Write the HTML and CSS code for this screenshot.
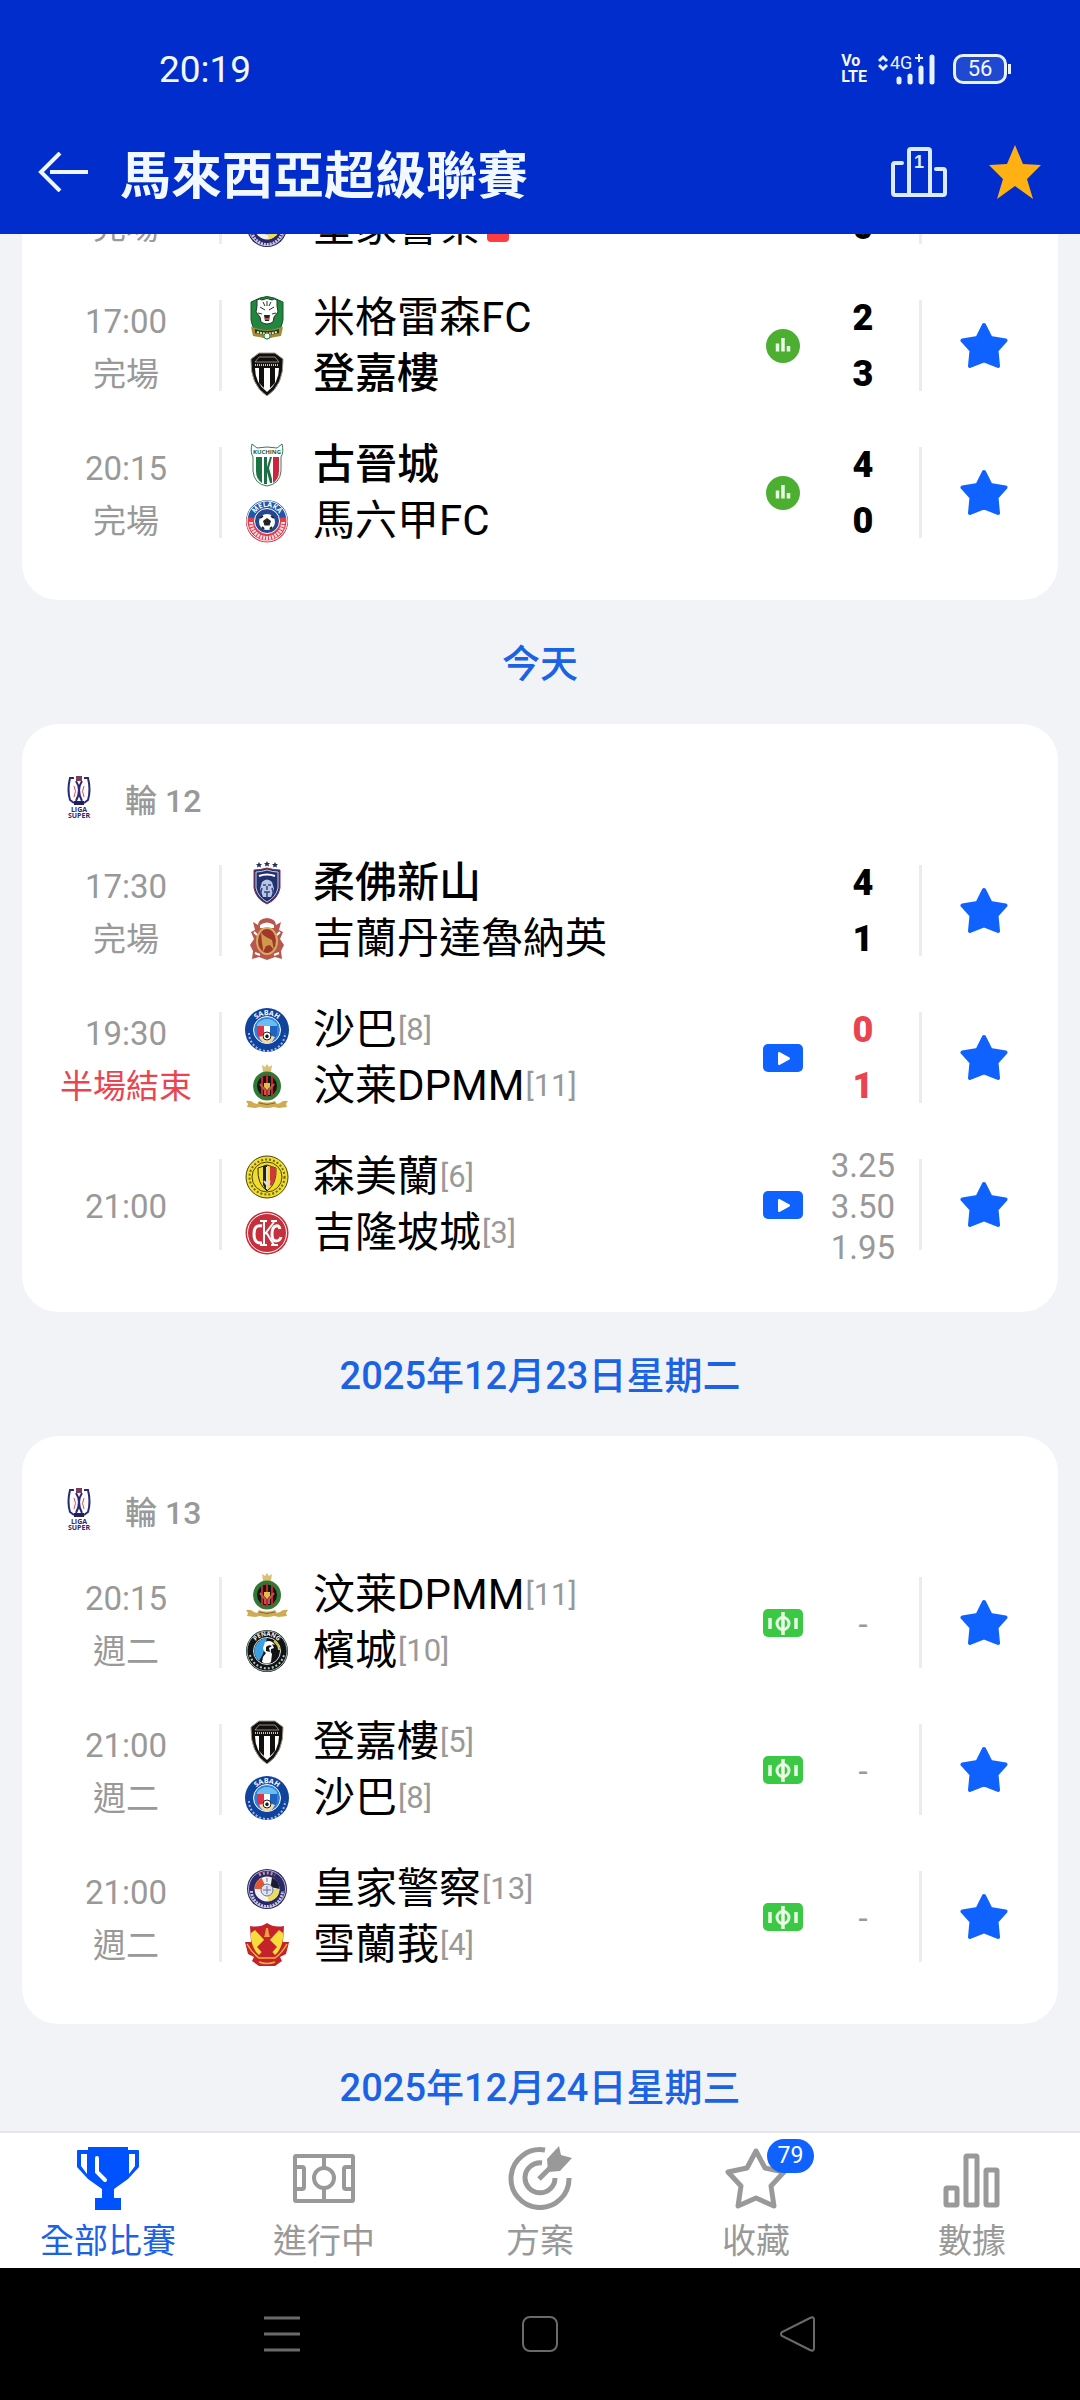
FILE: index.html
```html
<!DOCTYPE html>
<html lang="zh-Hant">
<head>
    <meta charset="UTF-8">
    <meta name="viewport" content="width=device-width, initial-scale=1.0">
    <title>馬來西亞超級聯賽</title>
    <link rel="stylesheet" href="styles.css">
</head>
<body>
    <!-- Shared icons and crests -->
    <svg class="sprite" aria-hidden="true">
        <symbol id="star" viewBox="0 0 48 48">
            <path d="M24 3l6.500 13 15 2.500-9 10 1.500 15.500-14-5.500-14 5.500 1.500-15.500-9-10 15-2.500z" fill="#1062fe" stroke="#1062fe" stroke-width="4" stroke-linejoin="round"/>
        </symbol>
        <symbol id="stats" viewBox="0 0 34 34">
            <circle cx="17" cy="17" r="17" fill="#4caf32"/>
            <path d="M11.500 14.500v8M17 9v13.500M22.500 17v5.500" stroke="#e9fbe4" stroke-width="3.500"/>
        </symbol>
        <symbol id="play" viewBox="0 0 40 28">
            <rect width="40" height="28" rx="5" fill="#1062fe"/>
            <path d="M16 9v11l10-5.500z" fill="#fff" stroke="#fff" stroke-width="2" stroke-linejoin="round"/>
        </symbol>
        <symbol id="pitch" viewBox="0 0 40 28">
            <rect width="40" height="28" rx="5" fill="#3bc844"/>
            <path d="M7 9v11M33 9v11M20 3v23" stroke="#e9fbe4" stroke-width="3.500"/>
            <circle cx="20" cy="14.500" r="6" fill="none" stroke="#e9fbe4" stroke-width="3"/>
        </symbol>

        <symbol id="league" viewBox="0 0 44 44">
            <path d="M17 2h-4q-3 12 0 22l4 3M27 2h4q3 12 0 22l-4 3" fill="none" stroke="#2b2875" stroke-width="2"/>
            <path d="M19 5q6 9 0 20M25 5q-6 9 0 20" fill="none" stroke="#2b2875" stroke-width="2"/>
            <path d="M17 10q3 5 0 11M27 10q-3 5 0 11" fill="none" stroke="#e0485a" stroke-width="1"/>
            <rect x="19" y="0" width="6" height="5" fill="#7a3f5c"/>
            <rect x="17" y="25" width="10" height="4" fill="#211f5e"/>
            <text x="22" y="36" class="crest-text" font-size="7" fill="#2b2875">LIGA</text>
            <text x="22" y="42" class="crest-text" font-size="7" fill="#2b2875">SUPER</text>
        </symbol>

        <symbol id="pdrm" viewBox="0 0 44 44">
            <circle cx="22" cy="22" r="20" fill="#2a2867"/>
            <circle cx="22" cy="22" r="18.500" fill="none" stroke="#b9b7d8" stroke-width="1"/>
            <circle cx="22" cy="22" r="12.500" fill="#f2f2f2"/>
            <path d="M9.500 22a12.500 12.500 0 0 1 7-11l5.500 11z" fill="#e2572f"/>
            <path d="M34.500 22a12.500 12.500 0 0 1-11 12.400L22 22z" fill="#e9dd5a"/>
            <path d="M27 10.500a12.500 12.500 0 0 1 7.500 11.500l-9-2z" fill="#1b1b33"/>
            <circle cx="22" cy="23" r="6" fill="#dfe2ee" stroke="#6b7196" stroke-width="1"/>
            <path d="M22 15v-4M18 23h8M22 19v8" stroke="#6b7196" stroke-width="1"/>
            <path d="M6.500 24a15.500 15.500 0 0 0 31 0" fill="none" stroke="#c9c8e4" stroke-width="3" stroke-dasharray="2 1"/>
            <path d="M14 8q8-4 16 0" fill="none" stroke="#c98fa0" stroke-width="3" stroke-dasharray="2 2"/>
        </symbol>

        <symbol id="migration" viewBox="0 0 44 44">
            <path d="M6 6l9-4q7-3 14 0l9 4v18q-2 14-16 19Q8 38 6 24z" fill="#23863f" stroke="#14562a" stroke-width="1"/>
            <path d="M12 4q3-2 5 0 5-3 10 0 2-2 5 0v6l1 6-4 5-1 5q-6 4-12 0l-1-5-4-5 1-6z" fill="#fff" stroke="#1e3a26" stroke-width="1"/>
            <path d="M15 11l5 3M29 11l-5 3M22 5v5M18 6l2 4M26 6l-2 4M13 17l4 1M31 17l-4 1" stroke="#1e3a26" stroke-width="1"/>
            <path d="M19 19h6l-1 6h-4z" fill="#1e2b22"/>
            <path d="M20 22h4v2h-4z" fill="#d44"/>
            <path d="M6 31l5 1q11 4 22 0l5-1-2 9-6 1q-8 2-16 0l-6-1z" fill="#a58a34"/>
            <path d="M10 33q12 4 24 0v4q-12 3-24 0z" fill="#1c3f25"/>
            <path d="M12 36q10 3 20 0" fill="none" stroke="#e6dfb8" stroke-width="2" stroke-dasharray="2 1"/>
            <circle cx="22" cy="40" r="3" fill="#fff" stroke="#23863f" stroke-width="1"/>
        </symbol>

        <symbol id="terengganu" viewBox="0 0 44 44">
            <path d="M14 1h16l8 6q1 26-16 37Q5 33 6 7z" fill="#12100f" stroke="#a09a8b" stroke-width="1"/>
            <path d="M14 5h16l4 5H10z" fill="none" stroke="#8d887c" stroke-width="1"/>
            <path d="M10 16h24q0 15-12 24Q10 31 10 16z" fill="#fff"/>
            <path d="M14 16h5v20l-5-5zM25 16h5v15l-5 5z" fill="#12100f"/>
            <path d="M10 13h24" stroke="#c8c4b8" stroke-width="2" stroke-dasharray="1 1"/>
        </symbol>

        <symbol id="kuching" viewBox="0 0 44 44">
            <path d="M7 1l5 4q10-2 20 0l5-4q2 8-1 13v14q-1 13-14 15Q9 41 8 28V14Q5 9 7 1z" fill="#fff" stroke="#3a7a52" stroke-width="1"/>
            <text x="22" y="11" class="crest-text" font-size="6" fill="#1a5c38">KUCHING</text>
            <path d="M11 14h6v26q-6-4-6-12z" fill="#1d7044"/>
            <path d="M19 14h3v10l3-10h2l-3 11 3 11v4h-2l-3-11v12h-3z" fill="#1d7044"/>
            <path d="M28 14h6v14q0 8-6 12z" fill="#cf2540"/>
        </symbol>

        <symbol id="melaka" viewBox="0 0 44 44">
            <circle cx="22" cy="22" r="21" fill="#2257a8"/>
            <path d="M1.500 18a21 21 0 1 0 41 0l-7 1H8z" fill="#e23c4d"/>
            <circle cx="22" cy="22" r="20" fill="none" stroke="#fff" stroke-width="1"/>
            <circle cx="22" cy="22" r="12.500" fill="#24488f" stroke="#fff" stroke-width="1"/>
            <circle cx="22" cy="23" r="8" fill="#fff"/>
            <path d="M22 19l4 3-1.500 4.500h-5L18 22z" fill="#222"/>
            <path d="M15 19l3-2M26 17l3 2M17 28l2 2M27 28l-2 2" stroke="#222" stroke-width="2"/>
            <path id="melaka-top" d="M8 22a14 14 0 0 1 28 0" fill="none"/>
            <text font-size="7" class="crest-text" fill="#fff"><textPath href="#melaka-top" startOffset="50%">MELAKA</textPath></text>
            <path d="M6 23a16 16 0 0 0 32 0" fill="none" stroke="#fbdde0" stroke-width="4" stroke-dasharray="2 1"/>
        </symbol>

        <symbol id="johor" viewBox="0 0 44 44">
            <path d="M14 1l1 2h2l-1.500 1.500.5 2-2-1-2 1 .5-2L11 3h2zM22 0l1 2h2l-1.500 1.500.5 2-2-1-2 1 .5-2L19 2h2zM30 1l1 2h2l-1.500 1.500.5 2-2-1-2 1 .5-2L27 3h2z" fill="#22305f"/>
            <path d="M9 9q6 0 13-2 7 2 13 2v18q-2 11-13 16Q11 38 9 27z" fill="#22306f" stroke="#8c3150" stroke-width="1"/>
            <path d="M11 11q5 0 11-2 6 2 11 2v16q-2 9-11 14-9-5-11-14z" fill="none" stroke="#c9cfe6" stroke-width="1"/>
            <path d="M14 15q8-3 16 0" fill="none" stroke="#fff" stroke-width="2"/>
            <path d="M17 21q5-5 10 0l2 7-3 8h-8l-3-8z" fill="#b9c6e3"/>
            <path d="M18 24h3M23 24h3M22 25v4M19 31h6M17 27l-2 7M27 27l2 7M22 31v6" stroke="#33467f" stroke-width="1.500"/>
        </symbol>

        <symbol id="kelantan" viewBox="0 0 44 44">
            <path d="M13 8q0-6 9-7 9 1 9 7l5-3-2 8 4 2-3 7 4 6-3 6 1 8-7-2-8 3-8-3-7 2 1-8-3-6 4-6-3-7 4-2-2-8z" fill="#b8574d"/>
            <path d="M15 8q7-5 14 0v3H15z" fill="#fff"/>
            <ellipse cx="22" cy="24" rx="10" ry="13" fill="#a2382c" stroke="#d8aa5a" stroke-width="2"/>
            <path d="M16 15q2 4 5 5l6 3 2 10-4-5-4 1-3 6q0-6-1-9z" fill="#cf9a4b"/>
            <path d="M10 36l5 2M34 36l-5 2M9 15l3 3M35 15l-3 3" stroke="#fff" stroke-width="2"/>
        </symbol>

        <symbol id="sabah" viewBox="0 0 44 44">
            <circle cx="22" cy="22" r="22" fill="#12439c"/>
            <circle cx="22" cy="22" r="13.500" fill="#2a83dc" stroke="#fff" stroke-width="1"/>
            <path d="M12 16q4-5 10-5t10 5v3H12z" fill="#6bbcf0"/>
            <path d="M12 18h7v15q-6-3-7-8z" fill="#e03244"/>
            <path d="M19 18h6v16h-6z" fill="#fff"/>
            <path d="M25 18h7v8q-1 5-7 8z" fill="#1f62c1"/>
            <path d="M14 29q8-4 16 0-3 6-8 7-5-1-8-7z" fill="#f3d9a8"/>
            <circle cx="22" cy="28" r="4" fill="#fff" stroke="#222" stroke-width="1"/>
            <path d="M22 26l2 2-1 2h-2l-1-2z" fill="#222"/>
            <path id="sabah-top" d="M7 22a15 15 0 0 1 30 0" fill="none"/>
            <text font-size="7" class="crest-text" fill="#fff"><textPath href="#sabah-top" startOffset="50%">SABAH</textPath></text>
            <path d="M4 25a18 18 0 0 0 36 0" fill="none" stroke="#9db9e6" stroke-width="2" stroke-dasharray="2 2"/>
        </symbol>

        <symbol id="dpmm" viewBox="0 0 44 44">
            <path d="M17 1l3 2 2-3 2 3 3-2-1 7h-8z" fill="#d9bf78"/>
            <ellipse cx="22" cy="22" rx="12" ry="12.500" fill="#1b1312" stroke="#2e7a35" stroke-width="4"/>
            <path d="M17 12v20M22 10v24M27 12v20" stroke="#b52a2f" stroke-width="2"/>
            <path d="M15 20l5 6v5M29 20l-5 6v5" fill="none" stroke="#c5534d" stroke-width="2"/>
            <path d="M19 19h6v4l-3 3-3-3z" fill="#e7bd45"/>
            <path d="M1 37q5-1 8 2l3 1 2-3q8 3 16 0l2 3 3-1q3-3 8-2l-2 3 1 3-8 1-5-1q-7 2-14 0l-5 1-8-1 1-3z" fill="#d0ab55"/>
            <path d="M14 39q8 3 16 0" fill="none" stroke="#8c6a25" stroke-width="1"/>
        </symbol>

        <symbol id="negeri" viewBox="0 0 44 44">
            <circle cx="22" cy="22" r="21" fill="#efdd2e" stroke="#4a430f" stroke-width="1"/>
            <circle cx="22" cy="22" r="17.500" fill="none" stroke="#6f6518" stroke-width="2" stroke-dasharray="2 2"/>
            <circle cx="22" cy="22" r="15" fill="none" stroke="#4a430f" stroke-width="1"/>
            <path d="M13 13l9-3 9 3q1 16-9 23-10-7-9-23z" fill="#f3df32" stroke="#3a2c12" stroke-width="1"/>
            <path d="M18 11l4-1v26q-3-3-4-6z" fill="#222"/>
            <path d="M25 11l6 2q1 11-5 18l-1-1z" fill="#cf3a36"/>
            <path d="M22 12v22M19 26l3 4 3-4" fill="none" stroke="#ddd" stroke-width="2"/>
        </symbol>

        <symbol id="kualalumpur" viewBox="0 0 44 44">
            <circle cx="22" cy="22" r="21.500" fill="#c5303c"/>
            <circle cx="22" cy="22" r="19.500" fill="none" stroke="#fff" stroke-width="1"/>
            <path d="M17 15q-8-2-8 8t8 9M35 18q-1-4-4-3-4 1-4 8t4 7q4 0 5-4" fill="none" stroke="#fff" stroke-width="3"/>
            <path d="M19 10v24M15 10h7M15 34h7M29 11l-9 12M21 21l8 13M26 10h6M26 34h7" fill="none" stroke="#fff" stroke-width="2"/>
        </symbol>

        <symbol id="penang" viewBox="0 0 44 44">
            <circle cx="22" cy="22" r="21" fill="#101416"/>
            <circle cx="22" cy="22" r="20" fill="none" stroke="#9fb3a8" stroke-width="1"/>
            <circle cx="22" cy="22" r="13.500" fill="#101416" stroke="#dfe5e6" stroke-width="1"/>
            <path d="M22 9a13 13 0 0 0-8 23l4-7z" fill="#3da0e0"/>
            <path d="M20 13q6-3 10 3l-3-1 2 4-3 1q-1 3 1 5l-1 8q-4 3-9 0l1-5 3-4q-3-2-3-5z" fill="#fff"/>
            <path d="M21 18q3-3 6-1l-3 2 1 4-4-1z" fill="#101416"/>
            <path d="M29 12q5 4 5 9" fill="none" stroke="#d9c84a" stroke-width="2"/>
            <path id="penang-top" d="M7 22a15 15 0 0 1 30 0" fill="none"/>
            <text font-size="6" class="crest-text" fill="#fff"><textPath href="#penang-top" startOffset="50%">PENANG</textPath></text>
            <path d="M5 26a17.500 17.500 0 0 0 34 0" fill="none" stroke="#b9c3c4" stroke-width="2" stroke-dasharray="2 2"/>
        </symbol>

        <symbol id="selangor" viewBox="0 0 44 44">
            <path d="M22 0q7 5 17 3l-1 16 6 0-3 12-6 3 2 4-7 5H14l-7-5 2-4-6-3-3-12h6L5 3q10 2 17-3z" fill="#c4232c"/>
            <path d="M6 10l4-3 12 13L34 7l4 3q1 10-5 19l-3 3-8-9-8 9-3-3Q5 20 6 10z" fill="#f7dc3c"/>
            <path d="M22 14l10 10-10 11-10-11z" fill="#c4232c"/>
            <path d="M20 11l1-6h2l1 6 1 3h-6z" fill="#f0a03c"/>
            <path d="M2 21q5 9 12 14h16q7-5 12-14M14 39q8 3 16 0" fill="none" stroke="#efb23c" stroke-width="1.500"/>
        </symbol>
    </svg>

    <header class="header">
        <div class="status-bar">
            <span class="clock">20:19</span>
            <div class="status-icons">
                <span class="volte">Vo<br>LTE</span>
                <svg class="signal" viewBox="0 0 58 32">
                    <path d="M1 8l4-4 4 4M1 12l4 4 4-4" fill="none" stroke="#e8f2ff" stroke-width="3"/>
                    <text x="12" y="16" font-size="18" fill="#e8f2ff">4G</text>
                    <path d="M37 5h8M41 1v8" stroke="#e8f2ff" stroke-width="2"/>
                    <path d="M21 26v3M32 23v6M43 15v14M54 4v25" stroke="#e8f2ff" stroke-width="5" stroke-linecap="round"/>
                </svg>
                <span class="battery">56</span>
            </div>
        </div>
        <div class="app-bar">
            <button class="icon-button" aria-label="返回">
                <svg class="back-icon" viewBox="0 0 50 40"><path d="M22 1L3 20l19 19M12 20h38" fill="none" stroke="#eef6ff" stroke-width="4"/></svg>
            </button>
            <h1 class="title">馬來西亞超級聯賽</h1>
            <button class="icon-button" aria-label="積分榜">
                <svg class="podium-icon" viewBox="0 0 56 52">
                    <path d="M11 17H4q-2 0-2 2v28q0 2 2 2h48q2 0 2-2V25q0-2-2-2h-7M18 49V5q0-2 2-2h17q2 0 2 2v44" fill="none" stroke="#dceaff" stroke-width="4" stroke-linecap="round"/>
                    <text x="28" y="22" font-size="18" font-weight="700" text-anchor="middle" fill="#dceaff">1</text>
                </svg>
            </button>
            <button class="icon-button" aria-label="取消收藏">
                <svg class="gold-star" viewBox="0 0 54 54"><path d="M27 0l8 19 18 1-14 14 6 20-18-13L9 54l6-20L1 20l18-1z" fill="#ffb012"/></svg>
            </button>
        </div>
    </header>

    <main class="content">
        <section class="card card-scrolled">
            <div class="match">
                <div class="when"><span></span><span>完場</span></div>
                <i class="divider"></i>
                <div class="teams">
                    <div class="team"></div>
                    <div class="team"><svg class="crest"><use href="#pdrm"/></svg><span>皇家警察</span><i class="red-card"></i></div>
                </div>
                <div class="info"></div>
                <div class="score"><span></span><span>0</span></div>
                <i class="divider"></i>
                <div class="favourite"></div>
            </div>
            <div class="match">
                <div class="when"><span>17:00</span><span>完場</span></div>
                <i class="divider"></i>
                <div class="teams">
                    <div class="team"><svg class="crest"><use href="#migration"/></svg><span>米格雷森FC</span></div>
                    <div class="team winner"><svg class="crest"><use href="#terengganu"/></svg><span>登嘉樓</span></div>
                </div>
                <div class="info"><svg class="stats-icon"><use href="#stats"/></svg></div>
                <div class="score"><span>2</span><span>3</span></div>
                <i class="divider"></i>
                <button class="favourite" aria-label="收藏"><svg class="star-icon"><use href="#star"/></svg></button>
            </div>
            <div class="match">
                <div class="when"><span>20:15</span><span>完場</span></div>
                <i class="divider"></i>
                <div class="teams">
                    <div class="team winner"><svg class="crest"><use href="#kuching"/></svg><span>古晉城</span></div>
                    <div class="team"><svg class="crest"><use href="#melaka"/></svg><span>馬六甲FC</span></div>
                </div>
                <div class="info"><svg class="stats-icon"><use href="#stats"/></svg></div>
                <div class="score"><span>4</span><span>0</span></div>
                <i class="divider"></i>
                <button class="favourite" aria-label="收藏"><svg class="star-icon"><use href="#star"/></svg></button>
            </div>
        </section>

        <h2 class="date">今天</h2>

        <section class="card">
            <div class="round"><svg class="crest"><use href="#league"/></svg><span>輪 12</span></div>
            <div class="match">
                <div class="when"><span>17:30</span><span>完場</span></div>
                <i class="divider"></i>
                <div class="teams">
                    <div class="team winner"><svg class="crest"><use href="#johor"/></svg><span>柔佛新山</span></div>
                    <div class="team"><svg class="crest"><use href="#kelantan"/></svg><span>吉蘭丹達魯納英</span></div>
                </div>
                <div class="info"></div>
                <div class="score"><span>4</span><span>1</span></div>
                <i class="divider"></i>
                <button class="favourite" aria-label="收藏"><svg class="star-icon"><use href="#star"/></svg></button>
            </div>
            <div class="match live">
                <div class="when"><span>19:30</span><span>半場結束</span></div>
                <i class="divider"></i>
                <div class="teams">
                    <div class="team"><svg class="crest"><use href="#sabah"/></svg><span>沙巴</span><small>[8]</small></div>
                    <div class="team"><svg class="crest"><use href="#dpmm"/></svg><span>汶莱DPMM</span><small>[11]</small></div>
                </div>
                <div class="info"><svg class="box-icon"><use href="#play"/></svg></div>
                <div class="score"><span>0</span><span>1</span></div>
                <i class="divider"></i>
                <button class="favourite" aria-label="收藏"><svg class="star-icon"><use href="#star"/></svg></button>
            </div>
            <div class="match">
                <div class="when"><span>21:00</span></div>
                <i class="divider"></i>
                <div class="teams">
                    <div class="team"><svg class="crest"><use href="#negeri"/></svg><span>森美蘭</span><small>[6]</small></div>
                    <div class="team"><svg class="crest"><use href="#kualalumpur"/></svg><span>吉隆坡城</span><small>[3]</small></div>
                </div>
                <div class="info"><svg class="box-icon"><use href="#play"/></svg></div>
                <div class="odds"><span>3.25</span><span>3.50</span><span>1.95</span></div>
                <i class="divider"></i>
                <button class="favourite" aria-label="收藏"><svg class="star-icon"><use href="#star"/></svg></button>
            </div>
        </section>

        <h2 class="date">2025年12月23日星期二</h2>

        <section class="card">
            <div class="round"><svg class="crest"><use href="#league"/></svg><span>輪 13</span></div>
            <div class="match">
                <div class="when"><span>20:15</span><span>週二</span></div>
                <i class="divider"></i>
                <div class="teams">
                    <div class="team"><svg class="crest"><use href="#dpmm"/></svg><span>汶莱DPMM</span><small>[11]</small></div>
                    <div class="team"><svg class="crest"><use href="#penang"/></svg><span>檳城</span><small>[10]</small></div>
                </div>
                <div class="info"><svg class="box-icon"><use href="#pitch"/></svg></div>
                <div class="odds"><span>-</span></div>
                <i class="divider"></i>
                <button class="favourite" aria-label="收藏"><svg class="star-icon"><use href="#star"/></svg></button>
            </div>
            <div class="match">
                <div class="when"><span>21:00</span><span>週二</span></div>
                <i class="divider"></i>
                <div class="teams">
                    <div class="team"><svg class="crest"><use href="#terengganu"/></svg><span>登嘉樓</span><small>[5]</small></div>
                    <div class="team"><svg class="crest"><use href="#sabah"/></svg><span>沙巴</span><small>[8]</small></div>
                </div>
                <div class="info"><svg class="box-icon"><use href="#pitch"/></svg></div>
                <div class="odds"><span>-</span></div>
                <i class="divider"></i>
                <button class="favourite" aria-label="收藏"><svg class="star-icon"><use href="#star"/></svg></button>
            </div>
            <div class="match">
                <div class="when"><span>21:00</span><span>週二</span></div>
                <i class="divider"></i>
                <div class="teams">
                    <div class="team"><svg class="crest"><use href="#pdrm"/></svg><span>皇家警察</span><small>[13]</small></div>
                    <div class="team"><svg class="crest"><use href="#selangor"/></svg><span>雪蘭莪</span><small>[4]</small></div>
                </div>
                <div class="info"><svg class="box-icon"><use href="#pitch"/></svg></div>
                <div class="odds"><span>-</span></div>
                <i class="divider"></i>
                <button class="favourite" aria-label="收藏"><svg class="star-icon"><use href="#star"/></svg></button>
            </div>
        </section>

        <h2 class="date">2025年12月24日星期三</h2>
    </main>

    <nav class="tabs">
        <a href="#" class="tab active">
            <svg class="tab-icon" viewBox="0 0 64 64">
                <path d="M12 1h40v3h10q1 0 1 1v16L52 33 38 43v9h7v12H19V52h7v-9L12 33 1 21V5q0-1 1-1h10z" fill="#0052ff"/>
                <path d="M5 8h6v20l-6-8zM53 8h6v12l-6 8z" fill="#fff"/>
                <path d="M21 12v14l8 8" fill="none" stroke="#fff" stroke-width="4" stroke-linecap="round"/>
            </svg>
            全部比賽
        </a>
        <a href="#" class="tab">
            <svg class="tab-icon" viewBox="0 0 64 64" fill="none" stroke="#999" stroke-width="4">
                <rect x="3" y="10" width="58" height="45" rx="1"/>
                <path d="M32 10v12M32 43v12M3 21h7q2 0 2 2v18q0 2-2 2H3M61 21h-7q-2 0-2 2v18q0 2 2 2h7"/>
                <circle cx="32" cy="32" r="10"/>
            </svg>
            進行中
        </a>
        <a href="#" class="tab">
            <svg class="tab-icon" viewBox="0 0 64 64" fill="none" stroke="#999" stroke-width="5">
                <path d="M37 4A29 29 0 1 0 61 32M34 17A15 15 0 1 0 47 32M31 33l15-15"/>
                <path d="M39 13L51 0l2 9 11 3-12 13-12 1z" fill="#999" stroke="none"/>
            </svg>
            方案
        </a>
        <a href="#" class="tab">
            <svg class="tab-icon" viewBox="0 0 64 64">
                <path d="M32 5l9 17 19 4-13 14 3 20-18-8-18 8 3-20L4 26l19-4z" fill="none" stroke="#999" stroke-width="5" stroke-linejoin="round"/>
            </svg>
            收藏
            <span class="badge">79</span>
        </a>
        <a href="#" class="tab">
            <svg class="tab-icon" viewBox="0 0 64 64" fill="none" stroke="#999" stroke-width="5">
                <rect x="6" y="42" width="11" height="17" rx="1"/>
                <rect x="26" y="10" width="11" height="49" rx="1"/>
                <rect x="46" y="24" width="11" height="35" rx="1"/>
            </svg>
            數據
        </a>
    </nav>

    <div class="system-nav">
        <button class="icon-button" aria-label="選單"><svg class="system-icon" viewBox="0 0 36 36"><path d="M0 2h36M0 18h36M0 34h36" stroke="#6a6a6a" stroke-width="3"/></svg></button>
        <button class="icon-button" aria-label="主畫面"><svg class="system-icon" viewBox="0 0 36 36"><rect x="1" y="1" width="34" height="34" rx="7" fill="none" stroke="#6a6a6a" stroke-width="2"/></svg></button>
        <button class="icon-button" aria-label="返回"><svg class="system-icon" viewBox="0 0 36 36"><path d="M34 4v28q0 4-4 2L2 20q-2-2 0-4L30 2q4-2 4 2z" fill="none" stroke="#6a6a6a" stroke-width="2"/></svg></button>
    </div>
</body>
</html>
```

FILE: styles.css
```css
* {
    box-sizing: border-box;
}

body {
    margin: 0;
    height: 100vh;
    display: flex;
    flex-direction: column;
    background: #f1f3f7;
    color: #000;
    font-family: Roboto, "Noto Sans CJK TC", sans-serif;
    overflow: hidden;
}

svg {
    display: block;
}

.sprite {
    display: none;
}

.crest-text {
    font-family: "Open Sans", sans-serif;
    font-weight: 700;
    text-anchor: middle;
}

.icon-button,
.favourite {
    padding: 0;
    border: 0;
    background: none;
    cursor: pointer;
}

/* Header */
.header {
    position: relative;
    z-index: 1;
    flex: none;
    background: #002dcb;
    color: #f2f8ff;
}

.status-bar {
    display: flex;
    align-items: center;
    justify-content: space-between;
    height: 110px;
    padding: 28px 73px 0 159px;
}

.clock {
    font-size: 37px;
}

.status-icons {
    display: flex;
    align-items: center;
}

.volte {
    font-size: 16px;
    font-weight: 700;
    line-height: 16px;
    margin-right: 11px;
}

.signal {
    width: 58px;
    height: 32px;
    margin-right: 17px;
}

.battery {
    position: relative;
    width: 54px;
    height: 30px;
    border: 3px solid #e8f2ff;
    border-radius: 10px;
    background: #2049d2;
    font-size: 22px;
    line-height: 24px;
    text-align: center;
}

.battery::after {
    content: "";
    position: absolute;
    top: 7px;
    right: -7px;
    width: 3px;
    height: 10px;
    background: #e8f2ff;
}

.app-bar {
    display: flex;
    align-items: center;
    height: 124px;
    padding: 0 38px;
}

.back-icon {
    width: 50px;
    height: 40px;
}

.title {
    flex: 1;
    margin: 0 0 0 32px;
    font-size: 51px;
    font-weight: 700;
}

.podium-icon {
    width: 56px;
    height: 52px;
    margin-right: 41px;
}

.gold-star {
    width: 54px;
    height: 54px;
}

/* Match list */
.content {
    flex: 1;
    min-height: 0;
    padding: 0 22px;
}

.card {
    padding: 35px 12px 34px 8px;
    border-radius: 36px;
    background: #fff;
}

/* first card is scrolled up under the header */
.card-scrolled {
    margin-top: -144px;
}

.date {
    margin: 0;
    height: 124px;
    padding-top: 2px;
    line-height: 124px;
    font-size: 38px;
    font-weight: 500;
    text-align: center;
    color: #1c62e4;
}

.round {
    display: flex;
    align-items: center;
    gap: 24px;
    height: 78px;
    padding-left: 27px;
    font-size: 32px;
    font-weight: 500;
    color: #999;
}

.match {
    display: grid;
    grid-template-columns: 189px 3px 1fr 48px 112px 3px 124px;
    align-items: center;
    height: 147px;
}

.when {
    display: flex;
    flex-direction: column;
    align-items: center;
    padding: 4px 0 0 3px;
    font-size: 33px;
    color: #999;
}

.when span {
    height: 53px;
    line-height: 53px;
}

.divider {
    height: 91px;
    background: #ececee;
}

.teams {
    padding-left: 23px;
}

.team {
    display: flex;
    align-items: center;
    height: 56px;
    line-height: 56px;
    font-size: 42px;
    white-space: nowrap;
}

.winner {
    font-weight: 500;
}

.crest {
    flex: none;
    width: 44px;
    height: 44px;
}

.team .crest {
    margin-right: 24px;
}

.team small {
    margin-left: 1px;
    font-size: 31px;
    color: #999;
}

.red-card {
    width: 22px;
    height: 30px;
    margin-left: 6px;
    border-radius: 4px;
    background: #ff3c40;
}

.info,
.favourite {
    display: flex;
    align-items: center;
    justify-content: center;
}

.stats-icon {
    width: 34px;
    height: 34px;
}

.box-icon {
    width: 40px;
    height: 28px;
}

.star-icon {
    width: 48px;
    height: 48px;
}

.score,
.odds {
    display: flex;
    flex-direction: column;
    align-items: center;
}

.score {
    font-size: 36px;
    font-weight: 900;
}

.score span {
    height: 56px;
    line-height: 56px;
}

.odds {
    padding-top: 3px;
    font-size: 33px;
    line-height: 41px;
    color: #999;
}

.live .when span:last-child,
.live .score {
    color: #ea4450;
}

/* Bottom tabs */
.tabs {
    position: relative;
    flex: none;
    display: flex;
    height: 137px;
    border-top: 2px solid #e6e6e8;
    background: #fff;
}

.tab {
    position: relative;
    flex: 1;
    display: flex;
    flex-direction: column;
    align-items: center;
    gap: 4px;
    padding-top: 13px;
    font-size: 34px;
    line-height: 54px;
    color: #999;
    text-decoration: none;
}

.tab.active {
    color: #1c62e4;
}

.tab-icon {
    flex: none;
    width: 64px;
    height: 64px;
}

.badge {
    position: absolute;
    top: 6px;
    left: 50%;
    margin-left: 11px;
    width: 47px;
    height: 34px;
    border-radius: 17px;
    background: #1062fe;
    color: #fff;
    font-size: 23px;
    line-height: 33px;
    text-align: center;
}

/* System navigation */
.system-nav {
    flex: none;
    display: flex;
    align-items: center;
    justify-content: center;
    gap: 222px;
    height: 132px;
    background: #000;
}

.system-icon {
    width: 36px;
    height: 36px;
}
```
